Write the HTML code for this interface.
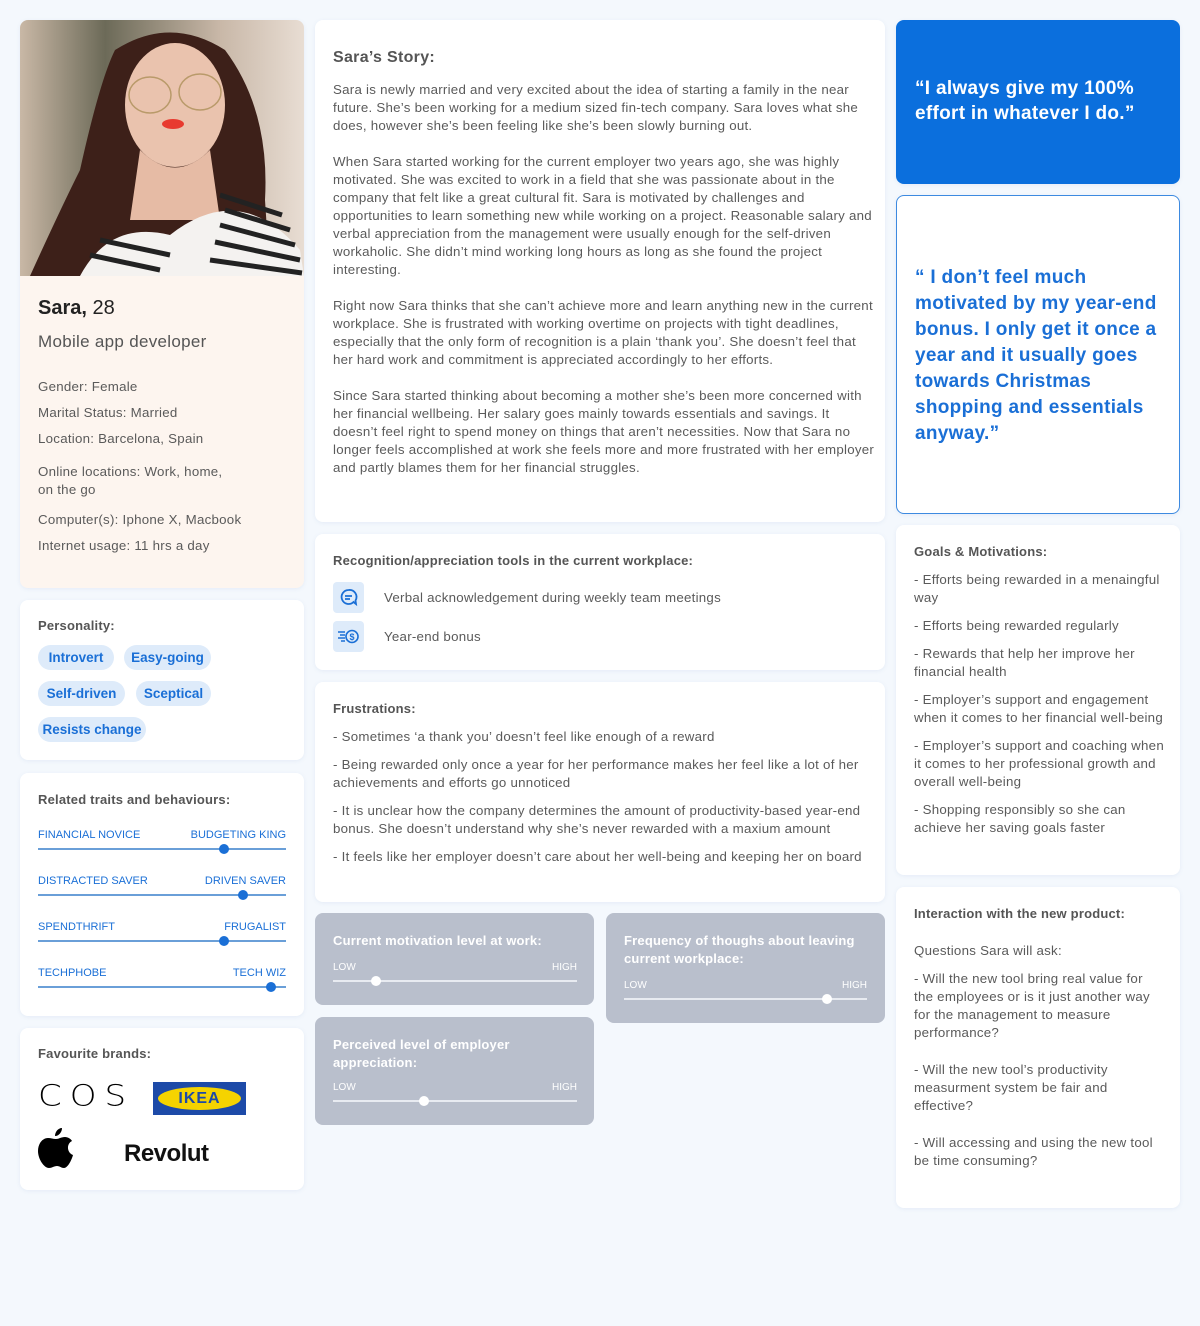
<!DOCTYPE html>
<html><head><meta charset="utf-8"><style>
*{margin:0;padding:0;box-sizing:border-box}
body{width:1200px;height:1326px;background:#f4f8fd;font-family:"Liberation Sans",sans-serif;color:#555;position:relative;overflow:hidden}
.c{position:absolute;background:#fff;border-radius:8px;box-shadow:0 1px 4px rgba(120,150,200,.12)}
.h{font-size:13px;font-weight:bold;color:#555;letter-spacing:.2px}
.p{font-size:13.3px;line-height:18px;color:#5a5a5a;letter-spacing:.25px}
.a{position:absolute}
.pill{position:absolute;height:25px;border-radius:13px;background:#deebfa;color:#1a6fd6;font-size:13.5px;font-weight:bold;line-height:25px;text-align:center}
.tr{position:absolute;left:18px;width:248px;font-size:11px;color:#1a6fd6}
.tr .l{position:absolute;left:0;top:0}.tr .r{position:absolute;right:0;top:0}
.tr .line{position:absolute;left:0;right:0;top:19px;height:2px;background:#6a9fd8}
.tr .dot{position:absolute;top:15px;width:10px;height:10px;border-radius:50%;background:#1a6fd6}
.g{position:absolute;background:#b9bfcc;border-radius:8px;color:#fff}
.g .t{position:absolute;left:18px;top:19px;font-size:13px;font-weight:bold;line-height:18px;width:250px;letter-spacing:.2px}
.g .lo,.g .hi{position:absolute;font-size:10px}
.g .ln{position:absolute;height:2px;background:#e8ebf1}
.g .d{position:absolute;width:10px;height:10px;border-radius:50%;background:#fff}
</style></head><body>

<div class="c" style="left:20px;top:20px;width:284px;height:568px;background:#fdf5ef;overflow:hidden">
 <svg width="284" height="256" style="position:absolute;left:0;top:0">
  <defs><linearGradient id="bg" x1="0" x2="1"><stop offset="0" stop-color="#c9b8a6"/><stop offset=".3" stop-color="#6c6a58"/><stop offset=".7" stop-color="#c8b7a7"/><stop offset="1" stop-color="#e8ddd3"/></linearGradient></defs>
  <rect width="284" height="256" fill="url(#bg)"/>
  <path d="M95 30 Q150 -5 205 30 Q250 90 245 180 L250 256 L10 256 Q40 190 60 150 Q80 60 95 30Z" fill="#3d2019"/>
  <ellipse cx="155" cy="85" rx="50" ry="62" fill="#eac3ae"/>
  <path d="M120 130 Q155 165 190 130 L200 200 L110 200Z" fill="#e6bba5"/>
  <path d="M60 256 Q90 200 150 215 Q220 160 280 230 L284 256Z" fill="#f4f2f0"/>
  <g stroke="#222" stroke-width="5"><path d="M70 235 L140 250"/><path d="M80 220 L150 235"/><path d="M200 175 L262 195"/><path d="M205 190 L270 210"/><path d="M200 205 L275 225"/><path d="M195 222 L280 240"/><path d="M190 240 L282 253"/></g>
  <ellipse cx="130" cy="75" rx="21" ry="18" fill="none" stroke="#b99a6a" stroke-width="1.5"/><ellipse cx="180" cy="72" rx="21" ry="18" fill="none" stroke="#b99a6a" stroke-width="1.5"/>
  <ellipse cx="153" cy="104" rx="11" ry="5" fill="#e83a2f"/>
 </svg>
 <div class="a" style="left:18px;top:277px;font-size:20px;color:#222"><b>Sara,</b> 28</div>
 <div class="a" style="left:18px;top:312px;font-size:17px;color:#555;letter-spacing:.3px">Mobile app developer</div>
 <div class="a p" style="left:18px;top:354px;line-height:26px">Gender: Female<br>Marital Status: Married<br>Location: Barcelona, Spain</div>
 <div class="a p" style="left:18px;top:443px;line-height:18px">Online locations: Work, home,<br>on the go</div>
 <div class="a p" style="left:18px;top:487px;line-height:26px">Computer(s): Iphone X, Macbook<br>Internet usage: 11 hrs a day</div>
</div>

<div class="c" style="left:20px;top:600px;width:284px;height:160px">
 <div class="a h" style="left:18px;top:18px">Personality:</div>
 <div class="pill" style="left:18px;top:45px;width:76px">Introvert</div>
 <div class="pill" style="left:104px;top:45px;width:87px">Easy-going</div>
 <div class="pill" style="left:18px;top:81px;width:87px">Self-driven</div>
 <div class="pill" style="left:116px;top:81px;width:75px">Sceptical</div>
 <div class="pill" style="left:18px;top:117px;width:108px">Resists change</div>
</div>

<div class="c" style="left:20px;top:773px;width:284px;height:243px">
 <div class="a h" style="left:18px;top:19px">Related traits and behaviours:</div>
 <div class="tr" style="top:56px"><span class="l">FINANCIAL NOVICE</span><span class="r">BUDGETING KING</span><div class="line"></div><div class="dot" style="left:181px"></div></div>
 <div class="tr" style="top:102px"><span class="l">DISTRACTED SAVER</span><span class="r">DRIVEN SAVER</span><div class="line"></div><div class="dot" style="left:200px"></div></div>
 <div class="tr" style="top:148px"><span class="l">SPENDTHRIFT</span><span class="r">FRUGALIST</span><div class="line"></div><div class="dot" style="left:181px"></div></div>
 <div class="tr" style="top:194px"><span class="l">TECHPHOBE</span><span class="r">TECH WIZ</span><div class="line"></div><div class="dot" style="left:228px"></div></div>
</div>

<div class="c" style="left:20px;top:1028px;width:284px;height:162px">
 <div class="a h" style="left:18px;top:18px">Favourite brands:</div>
 <div class="a" style="left:18px;top:48px;font-size:34px;letter-spacing:8px;color:#000;font-weight:100;font-family:'DejaVu Sans',sans-serif;transform:scaleY(.85)">COS</div>
 <div class="a" style="left:133px;top:54px;width:93px;height:33px;background:#1d4aa8"><div style="position:absolute;left:5px;top:5px;width:83px;height:23px;border-radius:50%;background:#f5d300;text-align:center;font:900 16px/23px 'Liberation Sans';color:#1d4aa8;letter-spacing:1px">IKEA</div></div>
 <svg class="a" style="left:18px;top:100px" width="36" height="42" viewBox="0 0 36 42"><path d="M24 0c0 4-3 8-7 8 0-4 3-8 7-8zM18 11c3 0 5-2 9-2 3 0 6 2 7 4-6 3-5 12 1 14-1 4-5 13-9 13-3 0-4-2-7-2s-5 2-8 2C6 40 0 31 0 23 0 15 5 10 10 10c3 0 5 1 8 1z" fill="#000"/></svg>
 <div class="a" style="left:104px;top:112px;font-size:24px;font-weight:bold;color:#111;letter-spacing:-.5px">Revolut</div>
</div>

<div class="c" style="left:315px;top:20px;width:570px;height:502px">
 <div class="a" style="left:18px;top:29px;font-size:16px;font-weight:bold;color:#555;letter-spacing:.3px">Sara’s Story:</div>
 <div class="a p" style="left:18px;top:61px;width:545px">Sara is newly married and very excited about the idea of starting a family in the near future. She’s been working for a medium sized fin-tech company. Sara loves what she does, however she’s been feeling like she’s been slowly burning out.<br><br>When Sara started working for the current employer two years ago, she was highly motivated. She was excited to work in a field that she was passionate about in the company that felt like a great cultural fit. Sara is motivated by challenges and opportunities to learn something new while working on a project. Reasonable salary and verbal appreciation from the management were usually enough for the self-driven workaholic. She didn’t mind working long hours as long as she found the project interesting.<br><br>Right now Sara thinks that she can’t achieve more and learn anything new in the current workplace. She is frustrated with working overtime on projects with tight deadlines, especially that the only form of recognition is a plain ‘thank you’. She doesn’t feel that her hard work and commitment is appreciated accordingly to her efforts.<br><br>Since Sara started thinking about becoming a mother she’s been more concerned with her financial wellbeing. Her salary goes mainly towards essentials and savings. It doesn’t feel right to spend money on things that aren’t necessities. Now that Sara no longer feels accomplished at work she feels more and more frustrated with her employer and partly blames them for her financial struggles.</div>
</div>

<div class="c" style="left:315px;top:534px;width:570px;height:136px">
 <div class="a h" style="left:18px;top:19px">Recognition/appreciation tools in the current workplace:</div>
 <div class="a" style="left:18px;top:48px;width:31px;height:31px;border-radius:4px;background:#deebfa"><svg width="31" height="31"><path d="M15.5 8a7 7 0 1 0 5 12l2.5 2-.5-3.5A7 7 0 0 0 15.5 8z" fill="none" stroke="#1a6fd6" stroke-width="1.8"/><path d="M12 14h7M12 17h5" stroke="#1a6fd6" stroke-width="1.8"/></svg></div>
 <div class="a p" style="left:69px;top:55px">Verbal acknowledgement during weekly team meetings</div>
 <div class="a" style="left:18px;top:87px;width:31px;height:31px;border-radius:4px;background:#deebfa"><svg width="31" height="31"><circle cx="19" cy="15.5" r="6" fill="none" stroke="#1a6fd6" stroke-width="1.6"/><text x="16.5" y="19" font-size="9" font-weight="bold" fill="#1a6fd6" font-family="Liberation Sans">$</text><path d="M5 11h7M7 14h5M5 17h7M8 20h4" stroke="#1a6fd6" stroke-width="1.5"/></svg></div>
 <div class="a p" style="left:69px;top:94px">Year-end bonus</div>
</div>

<div class="c" style="left:315px;top:682px;width:570px;height:220px">
 <div class="a h" style="left:18px;top:19px">Frustrations:</div>
 <div class="a p" style="left:18px;top:46px;width:540px">- Sometimes ‘a thank you’ doesn’t feel like enough of a reward<div style="height:10px"></div>- Being rewarded only once a year for her performance makes her feel like a lot of her achievements and efforts go unnoticed<div style="height:10px"></div>- It is unclear how the company determines the amount of productivity-based year-end bonus. She doesn’t understand why she’s never rewarded with a maxium amount<div style="height:10px"></div>- It feels like her employer doesn’t care about her well-being and keeping her on board</div>
</div>

<div class="g" style="left:315px;top:913px;width:279px;height:92px">
 <div class="t">Current motivation level at work:</div>
 <div class="lo" style="left:18px;top:49px">LOW</div><div class="hi" style="right:17px;top:49px">HIGH</div>
 <div class="ln" style="left:18px;right:17px;top:67px"></div><div class="d" style="left:56px;top:63px"></div>
</div>
<div class="g" style="left:315px;top:1017px;width:279px;height:108px">
 <div class="t">Perceived level of employer appreciation:</div>
 <div class="lo" style="left:18px;top:65px">LOW</div><div class="hi" style="right:17px;top:65px">HIGH</div>
 <div class="ln" style="left:18px;right:17px;top:83px"></div><div class="d" style="left:104px;top:79px"></div>
</div>
<div class="g" style="left:606px;top:913px;width:279px;height:110px">
 <div class="t">Frequency of thoughs about leaving current workplace:</div>
 <div class="lo" style="left:18px;top:67px">LOW</div><div class="hi" style="right:18px;top:67px">HIGH</div>
 <div class="ln" style="left:18px;right:18px;top:85px"></div><div class="d" style="left:216px;top:81px"></div>
</div>

<div class="c" style="left:896px;top:20px;width:284px;height:164px;background:#0b6fdd">
 <div class="a" style="left:19px;top:56px;font-size:19px;line-height:25px;color:#fff;font-weight:bold;width:250px;letter-spacing:.3px">“I always give my 100% effort in whatever I do.”</div>
</div>
<div class="c" style="left:896px;top:195px;width:284px;height:319px;border:1px solid #3d8ae0">
 <div class="a" style="left:18px;top:69px;font-size:19px;line-height:26px;color:#1a6fd6;font-weight:bold;width:250px;letter-spacing:.3px">“ I don’t feel much motivated by my year-end bonus. I only get it once a year and it usually goes towards Christmas shopping and essentials anyway.”</div>
</div>
<div class="c" style="left:896px;top:525px;width:284px;height:350px">
 <div class="a h" style="left:18px;top:19px">Goals &amp; Motivations:</div>
 <div class="a p" style="left:18px;top:46px;width:252px">- Efforts being rewarded in a menaingful way<div style="height:10px"></div>- Efforts being rewarded regularly<div style="height:10px"></div>- Rewards that help her improve her financial health<div style="height:10px"></div>- Employer’s support and engagement when it comes to her financial well-being<div style="height:10px"></div>- Employer’s support and coaching when it comes to her professional growth and overall well-being<div style="height:10px"></div>- Shopping responsibly so she can achieve her saving goals faster</div>
</div>
<div class="c" style="left:896px;top:887px;width:284px;height:321px">
 <div class="a h" style="left:18px;top:19px">Interaction with the new product:</div>
 <div class="a p" style="left:18px;top:55px;width:245px">Questions Sara will ask:<div style="height:10px"></div>- Will the new tool bring real value for the employees or is it just another way for the management to measure performance?<div style="height:19px"></div>- Will the new tool’s productivity measurment system be fair and effective?<div style="height:19px"></div>- Will accessing and using the new tool be time consuming?</div>
</div>
</body></html>
